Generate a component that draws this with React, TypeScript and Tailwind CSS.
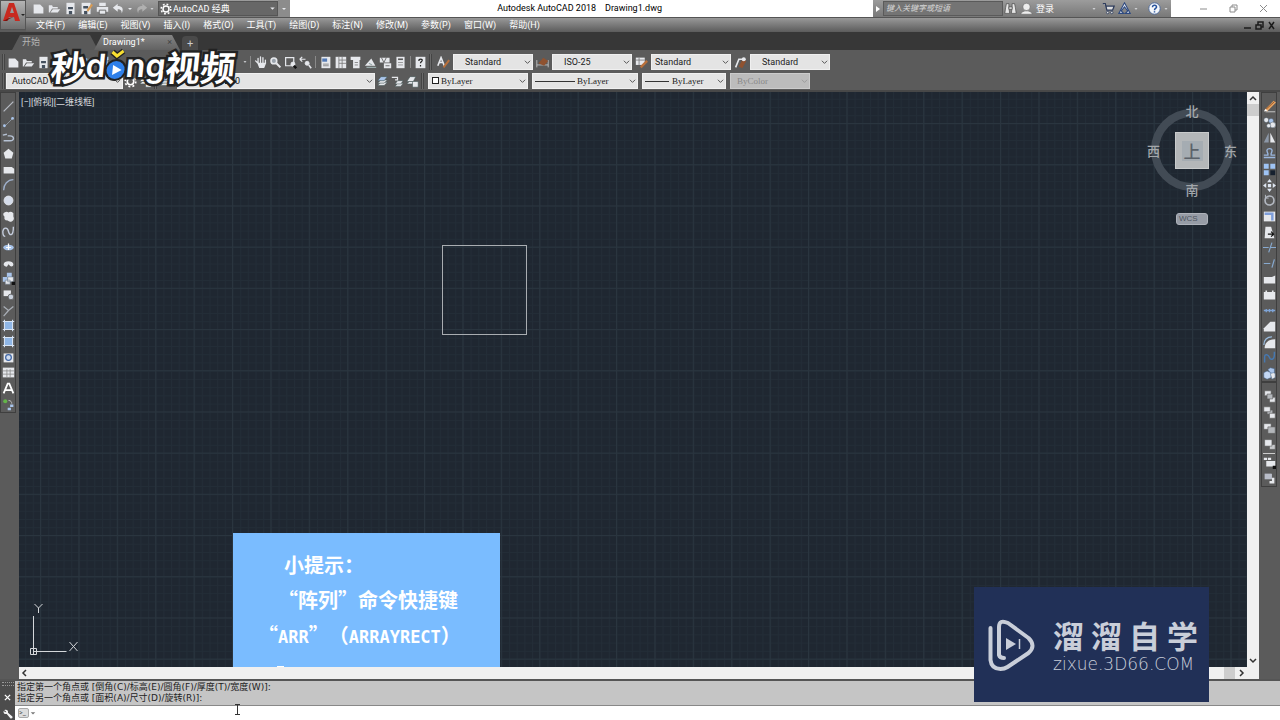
import type { ReactNode } from "react";

const FONT = "font-['Roboto','Noto_Sans_CJK_SC',sans-serif]";

const W = "#e6e8ec";
const B = "#a9c4ea";

// all glyphs are drawn on a 16x16 box
const glyphs: Record<string, ReactNode> = {
  new: <path d="M2 3h8l4 4v7H2z" fill={W} />,
  open: <path d="M1 13V4h4l1 2h6v2H5l-3 5zM6 9h9l-3 4H3z" fill={W} />,
  save: (
    <g>
      <path d="M3 1h10v14H3z" fill={W} />
      <path d="M5 6h6v3H5zM6 11h4v4H6z" fill="#44505e" />
    </g>
  ),
  saveAs: (
    <g>
      <path d="M2 1h11v14H2z" fill={W} />
      <path d="M4 5h6v3H4zM5 11h4v4H5z" fill="#44505e" />
      <path d="M8 10l6-8 2 2-6 8z" fill="#d79a52" />
    </g>
  ),
  print: (
    <g fill={W}>
      <path d="M4 1h8v4H4zM1 6h14v6H1z" />
      <path d="M4 10h8v5H4z" stroke="#555" />
    </g>
  ),
  undo: <path d="M7 2L1 7l6 5V9c4 0 5 2 5 5 3-6 0-9-5-9z" fill={W} />,
  redo: <path d="M9 2l6 5-6 5V9c-4 0-5 2-5 5-3-6 0-9 5-9z" fill="#b0b0b0" />,
  down: <path d="M4 6h8l-4 4z" fill={W} />,
  gear: (
    <g fill="none" stroke="#fff">
      <circle cx="8" cy="8" r="4" strokeWidth="2" />
      <circle cx="8" cy="8" r="6.5" strokeWidth="2" strokeDasharray="2.4 2.7" />
    </g>
  ),
  hand: (
    <path
      d="M5 9V3M8 8V1M11 8V2M14 9V5M5 9l-3-3M5 9l2 5h5l2-5z"
      stroke={W}
      strokeWidth="1.6"
      strokeLinecap="round"
      fill={W}
    />
  ),
  zoom: (
    <g stroke={W} fill="none">
      <circle cx="6" cy="6" r="3.5" strokeWidth="2" fill="#9aa3ad" />
      <path d="M9 9l5 5" strokeWidth="2.5" />
    </g>
  ),
  zoomWin: (
    <g stroke={W} fill="none">
      <path d="M2 2h10v10H2z" strokeWidth="1.5" />
      <circle cx="11" cy="10" r="2.5" fill={W} />
      <path d="M12 12l3 3" stroke="#111" strokeWidth="3" />
    </g>
  ),
  zoomPrev: (
    <g stroke={W} fill="none">
      <path d="M1 4h7M1 4l3-3M1 4l3 3" strokeWidth="1.5" />
      <circle cx="10" cy="9" r="2.5" fill={W} />
      <path d="M12 11l3 4" strokeWidth="2" />
    </g>
  ),
  props: (
    <g>
      <path d="M3 1h11v14H3z" fill={W} />
      <path d="M4 3h6v4H4z" fill="#5279b5" />
      <path d="M5 10h7M5 12h7" stroke="#777" />
    </g>
  ),
  center: (
    <g>
      <path d="M2 1h13v14H2z" fill={W} />
      <path d="M6 1v14M6 5h9M6 9h9M10 1v14" stroke="#777" />
    </g>
  ),
  palette: (
    <g>
      <path d="M2 1h12v4H2zM5 5h8v10H5z" fill={W} />
      <path d="M7 8h4M7 11h4" stroke="#777" />
    </g>
  ),
  sheet: (
    <g>
      <path d="M1 12L9 3l5 9z" fill={W} />
      <path d="M6 9l4 2M3 14h12" stroke="#9aa" strokeWidth="1.5" />
    </g>
  ),
  markup: (
    <g>
      <path d="M1 2h12v6H1zM6 9h9v6H6z" fill={W} />
      <path d="M3 2l3 6M9 2l-3 6M8 12h5" stroke="#555" />
    </g>
  ),
  calc: (
    <g>
      <path d="M3 1h10v14H3z" fill={W} />
      <path d="M5 3h6v2H5z" fill="#555" />
      <path d="M5 8h6M5 11h6" stroke="#888" />
    </g>
  ),
  help: (
    <g>
      <path d="M2 1h12v14H2z" fill={W} />
      <path d="M6 6c0-3 5-3 4 0-1 1-2 1-2 3M8 11v2" stroke="#222" strokeWidth="1.5" fill="none" />
    </g>
  ),
  textStyle: (
    <g fill="none">
      <path d="M1 12L5 2l4 10M3 8h5" stroke={W} strokeWidth="2" />
      <path d="M8 14l7-9" stroke="#b8703b" strokeWidth="2.5" />
    </g>
  ),
  dimStyle: (
    <g>
      <path d="M1 5v9M15 5v9M1 11h14" stroke="#ccc" />
      <path d="M3 9l6-7 6 4-5 6z" fill="#8f5230" />
    </g>
  ),
  tableStyle: (
    <g>
      <path d="M1 2h11v9H1z" fill={W} />
      <path d="M1 5h11M5 2v9" stroke="#777" />
      <path d="M7 14l8-8" stroke="#b8703b" strokeWidth="3" />
    </g>
  ),
  leaderStyle: (
    <g fill="none">
      <path d="M2 14l4-10h4" stroke={W} strokeWidth="2" />
      <path d="M8 14l5-9" stroke="#8f5230" strokeWidth="5" />
      <circle cx="12" cy="4" r="2.5" fill={W} />
    </g>
  ),
  layers: (
    <g stroke="#455" strokeWidth=".7">
      <path d="M2 13l4-4h8l-4 4z" fill={W} />
      <path d="M2 10l4-4h8l-4 4z" fill={W} />
      <path d="M2 7l4-5h8l-4 5z" fill={B} />
    </g>
  ),
  layerPrev: (
    <g stroke="#455" strokeWidth=".7">
      <path d="M5 14l3-4h7l-3 4z" fill={W} />
      <path d="M5 11l3-4h7l-3 4z" fill={W} />
      <path d="M1 3h7v3H5" fill="none" stroke={W} strokeWidth="1.5" />
    </g>
  ),
  layerState: (
    <g stroke="#455" strokeWidth=".7">
      <path d="M1 8l4-6h7l-3 6z" fill={W} />
      <path d="M1 11l3-3h7l-3 3z" fill={W} />
      <path d="M8 8h7v7H8z" fill={W} />
    </g>
  ),
  line: <path d="M2 14L14 2" stroke="#b6bbc4" strokeWidth="1.5" />,
  xline: (
    <g fill={B}>
      <path d="M3 13L13 3" stroke="#9aa2ad" />
      <circle cx="3" cy="12" r="1.7" />
      <circle cx="13" cy="3" r="1.7" />
    </g>
  ),
  pline: <path d="M1 5l5-1M2 12h8c6 0 5-6 0-6H7" stroke="#b6c2d4" strokeWidth="1.7" fill="none" />,
  polygon: <path d="M8 2l6 5-2 7H4L2 7z" fill={W} />,
  rect: <path d="M2 5h10l3 2v6H2z" fill={W} />,
  arc: <path d="M2 15C2 8 7 2 14 2" stroke="#9fb0cc" strokeWidth="1.7" fill="none" />,
  circle: <circle cx="8" cy="8" r="5.5" fill="#d5dcea" stroke={W} />,
  cloud: <path d="M3 3q3-2 5 0 3-2 6 1v4q2 4-2 6-3 1-5-1-3 0-4-2V8Q0 5 3 3z" fill={W} />,
  spline: <path d="M1 8c1-6 6-5 7 0s6 7 6-6M1 8c0 4 1 6 3 6" stroke="#c6cede" strokeWidth="1.7" fill="none" />,
  ellipse: (
    <g>
      <ellipse cx="8" cy="8" rx="6.5" ry="3.5" fill={B} />
      <path d="M8 3v8M5 8h6" stroke="#fff" strokeWidth="1.5" />
    </g>
  ),
  ellipseArc: <path d="M2 9c0-5 12-5 12 0 0 3-3 3-4 2l-2-2-2 3C4 12 2 11 2 9z" fill={W} />,
  insert: (
    <g>
      <path d="M6 1h6v5H6zM1 6h6v6H1z" fill={B} />
      <path d="M7 6h7v6H7zM4 10h6v5H4z" fill={W} stroke="#678" strokeWidth=".7" />
      <path d="M12 12h4v4h-4z" fill="#111" />
    </g>
  ),
  block: (
    <g>
      <path d="M2 3h9v7H2z" fill={W} />
      <circle cx="11" cy="11" r="3.5" fill="#c8d0dc" stroke="#555" />
    </g>
  ),
  point: <path d="M2 3l6 5 6-5M8 8l-6 7" stroke="#a9aeb6" strokeWidth="1.5" fill="none" />,
  hatch: (
    <g>
      <path d="M3 3h10v10H3z" fill="#8fb6e6" />
      <path d="M3 1v14M13 1v14M1 3h14M1 13h14" stroke="#d8e4f4" strokeWidth="1.3" />
    </g>
  ),
  region: (
    <g>
      <path d="M2 3h12v11H2z" fill={W} />
      <circle cx="8" cy="8" r="3.5" fill="#cfdcf0" stroke="#3f65a5" strokeWidth="1.5" />
    </g>
  ),
  table: (
    <g>
      <path d="M1 2h14v12H1z" fill={W} />
      <path d="M1 6h14M1 10h14M6 4v10M10 4v10" stroke="#8a8a8a" />
    </g>
  ),
  mtext: <path d="M2 14L7 2h2l5 12M4 10h8" stroke="#fff" strokeWidth="2.2" fill="none" />,
  addSel: (
    <g>
      <circle cx="4" cy="4" r="2.5" fill="#63b548" />
      <path d="M8 3c3 0 4 2 4 4" stroke="#ccc" fill="none" />
      <path d="M10 8h4v3h-4zM7 12h4v3H7z" fill={B} />
    </g>
  ),
  erase: (
    <g>
      <path d="M3 14.500h12" stroke="#ddd" />
      <path d="M2 12L13 1l3 2L5 14z" fill="#e3a161" />
      <path d="M3 12L14 2" stroke="#8a4a1c" />
      <path d="M1 14l2-3 3 2z" fill="#fff" />
    </g>
  ),
  copy: (
    <g stroke="#567" strokeWidth=".6">
      <circle cx="4" cy="5" r="3" fill={W} />
      <circle cx="10" cy="6" r="3" fill={B} />
      <circle cx="12" cy="11" r="3.5" fill={W} />
      <circle cx="7" cy="12" r="2.5" fill={W} />
    </g>
  ),
  mirror: (
    <g>
      <path d="M7 2v12H1z" fill="#8d98a8" />
      <path d="M9 2v12h6z" fill={W} />
    </g>
  ),
  offset: <path d="M1 13h14M1 10h5V8Q3 2 8 2t2 6v2h5" stroke="#9ab6dd" strokeWidth="1.7" fill="none" />,
  array: (
    <g>
      <path d="M1 1h6v6H1zM9 1h6v6H9zM1 9h6v6H1z" fill="#9fc4f4" />
      <path d="M9 9h6v6H9z" fill="#16202e" />
    </g>
  ),
  move: <path d="M8 0l3 4H5zM8 16l3-4H5zM0 8l4-3v6zM16 8l-4-3v6zM6 6h4v4H6z" fill="#dde5f0" />,
  rotate: (
    <g fill="none" stroke="#b4b9c2">
      <circle cx="8" cy="8" r="5.5" strokeWidth="2" />
      <path d="M3 1v4h4" strokeWidth="1.2" />
    </g>
  ),
  scale: (
    <g>
      <path d="M1 2h14v12H1z" fill={W} />
      <path d="M2 3h11v10h-3V6H2z" fill="#7e9edb" />
    </g>
  ),
  stretch: (
    <g>
      <path d="M3 1h7l4 14H2z" fill={W} />
      <path d="M6 10h7M10 7l3 3-3 3" stroke="#111" strokeWidth="1.5" fill="none" />
    </g>
  ),
  trim: <path d="M0 8h7M9 8h7M11 2L7 14" stroke="#87a9cf" strokeWidth="1.4" fill="none" />,
  extend: <path d="M1 8h8M14 3l-3 10" stroke="#87a9cf" strokeWidth="1.5" fill="none" />,
  brk: <path d="M1 5h10l4-2v10H1z" fill={W} />,
  brk2: <path d="M1 5h2V3h2v2h6V3h2v2h2v9H1z" fill={W} />,
  join: <path d="M1 8h14M4 6v4M8 6v4M12 6v4" stroke="#7fa4d6" strokeWidth="1.6" />,
  chamfer: <path d="M1 14V10L9 2h6v12z" fill={W} />,
  fillet: (
    <g>
      <path d="M2 15C2 8 7 4 15 4v11z" fill={W} />
      <path d="M1 11C1 5 5 1 11 1" stroke="#9bd" strokeWidth="1.5" fill="none" />
    </g>
  ),
  blend: <path d="M2 14V8c0-6 5-3 6 0s6 4 6-4V1" stroke="#4678b0" strokeWidth="1.8" fill="none" />,
  explode: (
    <g stroke="#47658e" strokeWidth=".6">
      <path d="M6 3l3-2 5 1v6l-4 1z" fill={B} />
      <path d="M1 7l4-2 5 2v6l-5 2-4-2z" fill="#c4d8f4" />
      <path d="M9 8l4-1 2 1v5l-4 2z" fill={W} />
    </g>
  ),
  order1: (
    <g stroke="#555" strokeWidth=".7">
      <path d="M2 1h8v6H2zM8 9h7v6H8z" fill={W} />
      <path d="M5 5h7v6H5z" fill="#b3b6ba" />
    </g>
  ),
  order2: (
    <g stroke="#555" strokeWidth=".7">
      <path d="M5 5h7v5H5z" fill="#b3b6ba" />
      <path d="M1 1h8v6H1zM8 9h7v6H8z" fill={W} />
    </g>
  ),
  order3: (
    <g stroke="#555" strokeWidth=".7">
      <path d="M1 2h9v7H1z" fill={W} />
      <path d="M6 6h9v8H6z" fill="#b3b6ba" />
    </g>
  ),
  order4: (
    <g stroke="#555" strokeWidth=".7">
      <path d="M8 8h7v6H8z" fill="#c6c8cb" />
      <path d="M2 2h9v8H2z" fill={W} />
    </g>
  ),
  annot: (
    <g>
      <path d="M1 2h4v3H1zM6 2h4v3H6zM4 6h11v7H4z" fill={W} />
      <path d="M12 12h4v4h-4z" fill="#111" />
    </g>
  ),
  hatchBack: (
    <g>
      <path d="M2 2h9v7H2z" fill="#b9bdc9" />
      <path d="M14 7v7H8v-3h3V7z" fill={W} />
    </g>
  ),
  find: (
    <g fill="#e6e6e6" stroke="#444" strokeWidth=".8">
      <path d="M3 2h3v5l1 7H1l1-7zM10 2h3l1 5 1 7H9l1-7z" />
      <path d="M6 6h4v3H6z" />
    </g>
  ),
  user: (
    <g fill="#eee" stroke="#555" strokeWidth=".6">
      <path d="M1 15q0-3 5-4h4q5 1 5 4z" />
      <circle cx="8" cy="6" r="4.5" />
    </g>
  ),
  cart: (
    <g fill="#ddd" stroke="#2e3c5c">
      <path d="M1 2h3l2 8h7l2-5H5" strokeWidth="1.6" />
      <circle cx="7" cy="13" r="1.5" />
      <circle cx="12" cy="13" r="1.5" />
    </g>
  ),
  exchange: <path d="M8 1l7 13H9l3-3-4-5-4 5 3 3H1z" stroke="#2e4a80" strokeWidth="1.3" fill="#e6ebf4" />,
  about: (
    <g>
      <circle cx="8" cy="8" r="7" fill="#f4f7fb" stroke="#41639c" />
      <path d="M5.5 6.500c0-4 5.500-3 5 0-.5 1.500-2.500 1.500-2.500 3.500M8 11.500v1.500" stroke="#24519c" strokeWidth="1.8" fill="none" />
    </g>
  ),
  wrench: <path d="M2 2c3-2 7 0 6 4l7 6c1 2-1 4-3 3L6 8C2 9 0 5 1 3l3 2 1-1z" fill="#f2f2f2" />,
};

function Glyph({ name, className = "size-[13px]" }: { name: string; className?: string }) {
  return (
    <svg viewBox="0 0 16 16" className={`shrink-0 ${className}`} aria-hidden="true">
      {glyphs[name]}
    </svg>
  );
}

function IconButton({ name }: { name: string }) {
  return (
    <button aria-label={name} className="flex h-[15px] w-[15px] shrink-0 items-center justify-center">
      <Glyph name={name} />
    </button>
  );
}

function Grip() {
  return <span className="mx-px h-4 w-[3px] shrink-0 border-x border-[#444] bg-[#6a6a6a]" />;
}

function Divider() {
  return <span className="mx-[2px] h-3 w-px shrink-0 bg-[#8a8a8a]" />;
}

interface DropProps {
  label: string;
  value: string;
  width: string;
  pad?: string;
  disabled?: boolean;
  children?: ReactNode;
}

function Drop({ label, value, width, pad = "pl-3", disabled, children }: DropProps) {
  return (
    <div
      className={`relative h-4 shrink-0 border ${width} ${
        disabled ? "border-[#ccc] bg-[#bcbcbc] text-[#888]" : "border-[#f0f0f0] bg-[#e4e4e4] text-[#222]"
      }`}
    >
      <select
        aria-label={label}
        disabled={disabled}
        className={`block h-full w-full appearance-none truncate leading-[14px] outline-none ${pad}`}
      >
        <option>{value}</option>
      </select>
      {children}
      <svg viewBox="0 0 8 8" className="pointer-events-none absolute right-px top-1 size-[7px]">
        <path d="M1 2l3 3 3-3" fill="none" stroke={disabled ? "#999" : "#444"} />
      </svg>
    </div>
  );
}

function TitleBar() {
  return (
    <header className="flex h-[17px] items-stretch bg-white text-[9px] text-white">
      <div className="flex w-[252px] shrink-0 items-center bg-linear-to-b from-[#9c9c9c] to-[#787878] pl-[5px]">
        <div className="flex gap-px">
          {["new", "open", "save", "saveAs", "print", "undo"].map((n) => (
            <IconButton key={n} name={n} />
          ))}
        </div>
        <Glyph name="down" className="size-2" />
        <IconButton name="redo" />
        <Glyph name="down" className="size-[6px]" />
        <div className="ml-[3px] flex h-[15px] flex-1 items-center border border-[#555] bg-[#676767] pl-px">
          <Glyph name="gear" className="size-3" />
          <select aria-label="工作空间" className="min-w-0 flex-1 appearance-none pl-px text-[9px] leading-3 outline-none">
            <option>AutoCAD 经典</option>
          </select>
          <Glyph name="down" className="size-[9px]" />
        </div>
      </div>
      <div className="flex w-3 shrink-0 items-center justify-center bg-[#8c8c8c]">
        <Glyph name="down" className="size-2" />
      </div>
      <div className="mr-[211px] flex-1 text-right text-[9px] leading-4 whitespace-pre text-black">
        Autodesk AutoCAD 2018{"    "}Drawing1.dwg
      </div>
      <div className="flex w-[298px] shrink-0 items-center bg-linear-to-b from-[#9c9c9c] to-[#787878]">
        <svg viewBox="0 0 8 8" className="mx-px size-2">
          <path d="M2 1l4 3-4 3z" fill="#fff" />
        </svg>
        <input
          aria-label="搜索"
          placeholder="键入关键字或短语"
          className="h-[15px] w-[120px] border border-[#5a5a5a] bg-[#747474] pl-[2px] text-[8px] italic outline-none placeholder:text-[#d6d6d6]"
        />
        <div className="flex flex-1 items-center gap-px">
          <IconButton name="find" />
          <IconButton name="user" />
          <button className="mr-auto px-px leading-3">登录</button>
          <Glyph name="down" className="size-[6px]" />
          <span className="w-[2px]" />
          <IconButton name="cart" />
          <IconButton name="exchange" />
          <Glyph name="down" className="size-[6px]" />
          <span className="w-[6px]" />
          <IconButton name="about" />
          <Glyph name="down" className="mr-[2px] size-[6px]" />
        </div>
      </div>
      <div className="flex w-[109px] shrink-0 items-center justify-between pr-3 pl-[28px]">
        {["M1 5h7", "M1 3h5v5H1zM3 3V1h5v5H6", "M1 1l7 7M8 1L1 8"].map((d, i) => (
          <button key={d} aria-label={["最小化", "还原", "关闭"][i]}>
            <svg viewBox="0 0 9 9" className="size-[9px]">
              <path d={d} fill="none" stroke="#8c8c8c" />
            </svg>
          </button>
        ))}
      </div>
    </header>
  );
}

const menus = [
  "文件(F)", "编辑(E)", "视图(V)", "插入(I)", "格式(O)", "工具(T)",
  "绘图(D)", "标注(N)", "修改(M)", "参数(P)", "窗口(W)", "帮助(H)",
];

function MenuBar() {
  return (
    <nav className="flex h-[15px] items-center border-t border-[#555] bg-linear-to-b from-[#999] to-[#5c5c5c] pr-1 pl-[10px] text-[9px] text-white">
      <div className="flex flex-1 gap-[13px]">
        {menus.map((m) => (
          <button key={m} className="leading-3 whitespace-nowrap">{m}</button>
        ))}
      </div>
      <div className="flex gap-[3px]">
        {["M1 7h7", "M1 4h5v4H1zM3 4V1h5v5H6", "M2 1l5 7M7 1L2 8"].map((d, i) => (
          <button key={d} aria-label={["最小化图形", "还原图形", "关闭图形"][i]}>
            <svg viewBox="0 0 9 9" className="size-[9px]">
              <path d={d} fill="none" stroke="#1c1c1c" strokeWidth="1.5" />
            </svg>
          </button>
        ))}
      </div>
    </nav>
  );
}

function FileTabs() {
  return (
    <div className="flex h-[18px] items-end bg-[#373737] pl-3 text-[9px]">
      <button className="h-[15px] w-[86px] bg-[#595959] pl-[10px] text-left text-[#b4b4b4] [clip-path:polygon(8px_0,78px_0,100%_100%,0_100%)]">
        开始
      </button>
      <button className="-ml-1 flex h-[15px] w-[86px] items-center justify-between bg-linear-to-b from-[#858585] to-[#626262] pr-2 pl-[9px] text-white [clip-path:polygon(8px_0,78px_0,100%_100%,0_100%)]">
        Drawing1*
        <span className="text-[#444]">×</span>
      </button>
      <button aria-label="新图形" className="ml-[2px] h-[14px] w-4 rounded-t-sm bg-[#4a4a4a] text-[11px] leading-[13px] text-[#ccc]">
        +
      </button>
    </div>
  );
}

function Toolbars() {
  return (
    <div className="flex h-[42px] flex-col gap-[3px] border-b-2 border-[#484848] bg-[#5b5b5b] pt-1 text-[9px]">
      <div className="flex h-4 items-center pl-px">
        <Grip />
        {["new", "open", "save", "print", "find", "copy", "palette"].map((n) => (
          <IconButton key={n} name={n} />
        ))}
        <div className="flex w-[137px] shrink-0 justify-end">
          <Glyph name="down" className="size-[6px]" />
        </div>
        <Divider />
        {["hand", "zoom", "zoomWin", "zoomPrev"].map((n) => (
          <IconButton key={n} name={n} />
        ))}
        <Divider />
        {["props", "center", "palette", "sheet", "markup", "calc"].map((n) => (
          <IconButton key={n} name={n} />
        ))}
        <Divider />
        <IconButton name="help" />
        <Grip />
        <div className="ml-[3px] flex items-center gap-[2px]">
          <IconButton name="textStyle" />
          <Drop label="文字样式" value="Standard" width="w-[80px]" pad="pl-[11px]" />
          <IconButton name="dimStyle" />
          <Drop label="标注样式" value="ISO-25" width="w-[80px]" pad="pl-[11px]" />
          <IconButton name="tableStyle" />
          <Drop label="表格样式" value="Standard" width="w-[80px]" pad="pl-[3px]" />
          <IconButton name="leaderStyle" />
          <Drop label="多重引线样式" value="Standard" width="w-[80px]" pad="pl-[11px]" />
        </div>
      </div>
      <div className="flex h-4 items-center pl-px">
        <Grip />
        <Drop label="工作空间" value="AutoCAD 经典" width="w-[117px]" pad="pl-[5px]" />
        <IconButton name="gear" />
        <IconButton name="layerState" />
        <Grip />
        <IconButton name="layers" />
        <span className="w-1" />
        <Drop label="图层" value="0" width="w-[198px]" pad="pl-[57px]">
          <span className="pointer-events-none absolute top-[3px] left-[47px] size-[7px] border border-[#222]" />
        </Drop>
        <IconButton name="layers" />
        <IconButton name="layerPrev" />
        <IconButton name="layerState" />
        <Grip />
        <div className="ml-[3px] flex items-center gap-1 font-['Liberation_Serif',serif]">
          <Drop label="颜色" value="ByLayer" width="w-[100px]" pad="pl-3">
            <span className="pointer-events-none absolute top-[3px] left-[3px] size-[7px] border border-[#222] bg-white" />
          </Drop>
          <Drop label="线型" value="ByLayer" width="w-[106px]" pad="pl-[44px]">
            <span className="pointer-events-none absolute top-[7px] left-[2px] h-px w-10 bg-[#333]" />
          </Drop>
          <Drop label="线宽" value="ByLayer" width="w-[84px]" pad="pl-[29px]">
            <span className="pointer-events-none absolute top-[7px] left-[2px] h-px w-6 bg-[#333]" />
          </Drop>
          <Drop label="打印样式" value="ByColor" width="w-[80px]" pad="pl-[6px]" disabled />
        </div>
      </div>
    </div>
  );
}

const drawTools = [
  "line", "xline", "pline", "polygon", "rect", "arc", "circle", "cloud", "spline", "ellipse",
  "ellipseArc", "insert", "block", "point", "hatch", "hatch", "region", "table", "mtext", "addSel",
];

const modifyTools = [
  "erase", "copy", "mirror", "offset", "array", "move", "rotate", "scale", "stretch",
  "trim", "extend", "brk", "brk2", "join", "chamfer", "fillet", "blend", "explode",
];

function DrawBar() {
  return (
    <aside className="w-[19px] shrink-0 bg-[#5b5b5b]">
      <div className="flex h-[321px] w-4 flex-col items-center justify-between border border-[#3f3f3f] pt-[6px]">
        {drawTools.map((n, i) => (
          <IconButton key={i} name={n} />
        ))}
      </div>
    </aside>
  );
}

function ModifyBar() {
  return (
    <aside className="w-[21px] shrink-0 bg-[#5b5b5b] pl-[2px]">
      <div className="flex h-[290px] w-4 flex-col items-center justify-between border border-[#3f3f3f] pt-[6px]">
        {modifyTools.map((n) => (
          <IconButton key={n} name={n} />
        ))}
      </div>
      <div className="flex w-4 flex-col items-center gap-px border border-[#3f3f3f] pt-[6px]">
        {["order1", "order2", "order3", "order4"].map((n) => (
          <IconButton key={n} name={n} />
        ))}
        <span className="h-px w-3 bg-[#ccc]" />
        <IconButton name="annot" />
        <IconButton name="hatchBack" />
      </div>
    </aside>
  );
}

function Grid() {
  return (
    <svg className="absolute inset-0 h-full w-full" aria-hidden="true">
      <defs>
        <pattern id="minor" x="21.500" y="31.500" width="7.68" height="8.24" patternUnits="userSpaceOnUse">
          <path d="M.5 0v8.240M0 .5h7.680" stroke="#232d37" fill="none" />
        </pattern>
        <pattern id="major" x="21" y="31" width="38.4" height="41.2" patternUnits="userSpaceOnUse">
          <path d="M.5 0v41.200M0 .5h38.400" stroke="#2a353f" fill="none" />
        </pattern>
      </defs>
      <rect width="100%" height="100%" fill="url(#minor)" />
      <rect width="100%" height="100%" fill="url(#major)" />
    </svg>
  );
}

function ViewCube() {
  return (
    <div className="absolute top-3 right-[10px] w-[90px] font-['Noto_Sans_CJK_SC',sans-serif] text-[13px] leading-[14px] font-medium text-[#a3a7ab]">
      <div className="absolute top-[5px] left-[4px] size-[82px] rounded-full border-[8px] border-[#424b55]" />
      <div className="relative flex flex-col items-center">
        <span>北</span>
        <div className="my-[14px] flex w-full items-center justify-between">
          <span>西</span>
          <button className="flex h-[37px] w-[34px] items-center justify-center border border-[#c9cbcc] bg-[#b4b7b9]">
            <span className="bg-[#a5acb2] px-[2px] text-[17px] leading-5 text-[#5b626a]">上</span>
          </button>
          <span>东</span>
        </div>
        <span>南</span>
        <button className="mt-4 h-3 w-8 rounded-[3px] border border-[#aeb2ba] bg-[#979ca6] pl-[2px] text-left font-['Liberation_Sans',sans-serif] text-[8px] leading-[10px] text-[#4e5560]">
          WCS
        </button>
      </div>
    </div>
  );
}

function TipCard() {
  return (
    <div className="absolute bottom-0 left-[214px] h-[134px] w-[267px] bg-[#7abcff] pt-[14px] font-['Noto_Sans_CJK_SC',sans-serif] text-[20px] leading-[35px] font-bold whitespace-nowrap text-white">
      <p className="pl-[51px]">小提示：</p>
      <p className="pl-[45px]">“阵列”命令快捷键</p>
      <p className="flex items-baseline pl-[25px]">
        <span>“</span>
        <span className="font-['DejaVu_Sans_Mono',monospace] text-[17px]">ARR</span>
        <span>”</span>
        <span>（</span>
        <span className="font-['DejaVu_Sans_Mono',monospace] text-[17px]">ARRAYRECT</span>
        <span>）</span>
      </p>
      <span className="absolute bottom-0 left-[44px] h-px w-[7px] bg-white" />
    </div>
  );
}

function Canvas() {
  return (
    <div className="relative min-w-0 flex-1 overflow-hidden bg-[#1f2731]">
      <Grid />
      <div className="absolute top-1 left-[2px] text-[9px] leading-3 text-[#d5d8dc]">[−][俯视][二维线框]</div>
      <div className="absolute top-[153px] left-[423px] h-[90px] w-[85px] border border-[#a9adb1]" />
      <ViewCube />
      <svg viewBox="0 0 52 60" className="absolute bottom-[8px] left-[10px] h-[60px] w-[52px]" aria-label="UCS">
        <g fill="none" stroke="#d4d7da">
          <path d="M4.500 17v38M4.500 52.500h33M1.500 49.500h6v6h-6z" />
          <path d="M5.500 5l4 4 4-4M9.500 9v5M40.500 43l8 9M48.500 43l-8 9" />
        </g>
      </svg>
      <TipCard />
    </div>
  );
}

function ScrollArrow({ d, label }: { d: string; label: string }) {
  return (
    <button aria-label={label} className="flex size-3 shrink-0 items-center justify-center">
      <svg viewBox="0 0 8 8" className="size-2">
        <path d={d} fill="none" stroke="#333" strokeWidth="1.5" />
      </svg>
    </button>
  );
}

function CommandLine() {
  return (
    <footer className="flex shrink-0 border-t-2 border-[#555]">
      <div className="flex w-[15px] shrink-0 flex-col items-center justify-between bg-[#4c4c4c] py-px">
        <span className="h-1 w-3 border-y border-dotted border-[#999]" />
        <button aria-label="关闭命令行" className="h-3">
          <svg viewBox="0 0 8 8" className="size-[7px]">
            <path d="M1 1l6 6M7 1L1 7" stroke="#fff" strokeWidth="1.5" />
          </svg>
        </button>
        <button aria-label="自定义"><Glyph name="wrench" className="size-[10px]" /></button>
      </div>
      <div className="min-w-0 flex-1">
        <div className="h-[25px] border-b border-[#888] bg-[#c5c5c5] pt-px pl-[2px] font-['DejaVu_Sans','Noto_Sans_CJK_SC',sans-serif] text-[9px] leading-[11px] text-[#222]">
          <p>指定第一个角点或 [倒角(C)/标高(E)/圆角(F)/厚度(T)/宽度(W)]:</p>
          <p>指定另一个角点或 [面积(A)/尺寸(D)/旋转(R)]:</p>
        </div>
        <div className="flex h-[14px] items-center bg-white pl-[3px]">
          <span className="h-[10px] w-[11px] rounded-[2px] border border-[#aaa] bg-[#ddd] text-[7px] leading-[8px] text-[#555]">&gt;_</span>
          <svg viewBox="0 0 8 8" className="mx-px size-[6px]"><path d="M1 3h6L4 6z" fill="#777" /></svg>
          <input aria-label="命令" className="h-3 flex-1 text-[9px] outline-none" />
        </div>
      </div>
    </footer>
  );
}

function MiaodongMark() {
  return (
    <div className="pointer-events-none absolute top-[45px] left-[51px] flex -skew-x-6 items-center font-['Noto_Sans_CJK_SC',sans-serif] text-[35px] leading-[42px] font-bold text-white [-webkit-text-stroke:5px_#222] [paint-order:stroke_fill]">
      <span>秒</span>
      <span className="font-['Inter',sans-serif] text-[32px] font-semibold">d</span>
      <svg viewBox="0 0 20 40" className="h-10 w-5 overflow-visible" aria-label="o">
        <path d="M5 6l5 4 6-5" fill="none" stroke="#222" strokeWidth="6" />
        <path d="M5 6l5 4 6-5" fill="none" stroke="#f8df32" strokeWidth="3" />
        <circle cx="10" cy="24" r="11" fill="#222" />
        <circle cx="10" cy="24" r="9" fill="#2f80ea" />
        <path d="M7 19l9 5-9 5z" fill="#fff" />
      </svg>
      <span className="font-['Inter',sans-serif] text-[32px] font-semibold">ng</span>
      <span>视频</span>
    </div>
  );
}

function ZixueMark() {
  return (
    <div className="absolute right-[71px] bottom-[18px] flex h-[115px] w-[235px] items-center gap-4 bg-[#213057] pl-[13px] text-[#c9ced9]">
      <svg viewBox="0 0 50 52" className="h-[52px] w-[50px] shrink-0" aria-hidden="true">
        <g fill="none" stroke="#c9ced9" strokeWidth="4" strokeLinecap="round" strokeLinejoin="round">
          <path d="M3.500 9v32q1 9 10 9 4 0 7-2l21-14q8-7 0-15L21 4q-9-4-9 4v28q1 3 5 3" />
        </g>
        <path d="M19 19l10 6-10 6z" fill="#c9ced9" />
        <path d="M32.500 20v10" stroke="#c9ced9" strokeWidth="1.500" />
      </svg>
      <div className="flex flex-col">
        <div className="flex gap-[7px] font-['Noto_Sans_CJK_SC',sans-serif] text-[31px] leading-[38px] font-bold">
          <span>溜</span>
          <span>溜</span>
          <span>自</span>
          <span>学</span>
        </div>
        <span className="font-['DejaVu_Sans',sans-serif] text-[17px] leading-5 font-extralight">zixue.3D66.COM</span>
      </div>
    </div>
  );
}

export default function App() {
  return (
    <div className={`relative flex h-screen flex-col overflow-hidden bg-[#5b5b5b] ${FONT}`}>
      <div className="flex shrink-0">
        <button aria-label="应用程序菜单" className="z-10 -mb-1 flex h-[30px] w-[26px] shrink-0 items-center border border-[#555] bg-linear-to-b from-[#b4b4b4] to-[#707070]">
          <svg viewBox="0 0 24 28" className="h-7 w-6">
            <path d="M2 20L8 2h5l6 18h-5l-1-4H8l-2 4zM9 12h4l-2-6z" fill="#c8291f" fillRule="evenodd" />
            <path d="M2 20l6-3 5-1-5 2-2 2z" fill="#7d120e" />
            <path d="M20 13h4l-2 2z" fill="#222" />
          </svg>
        </button>
        <div className="min-w-0 flex-1">
          <TitleBar />
          <MenuBar />
        </div>
      </div>
      <FileTabs />
      <Toolbars />
      <main className="flex min-h-0 flex-1">
        <DrawBar />
        <div className="flex min-w-0 flex-1 flex-col">
          <div className="flex min-h-0 flex-1">
            <Canvas />
            <div className="flex w-3 shrink-0 flex-col justify-between bg-[#f0f0f0]">
              <div>
                <ScrollArrow label="向上滚动" d="M1 6l3-3 3 3" />
                <div className="h-3 bg-[#cdcdcd]" />
              </div>
              <ScrollArrow label="向下滚动" d="M1 2l3 3 3-3" />
            </div>
          </div>
          <div className="flex h-3 shrink-0 items-center bg-[#f0f0f0] pr-3">
            <ScrollArrow label="向左滚动" d="M5 1L2 4l3 3" />
            <span className="ml-auto h-3 w-[11px] bg-[#cdcdcd]" />
            <ScrollArrow label="向右滚动" d="M3 1l3 3-3 3" />
          </div>
        </div>
        <ModifyBar />
      </main>
      <CommandLine />
      <MiaodongMark />
      <ZixueMark />
      <svg viewBox="0 0 5 11" className="pointer-events-none absolute bottom-[5px] left-[235px] h-[11px] w-[5px]">
        <path d="M0 .5h5M0 10.500h5M2.500 0v11" stroke="#333" fill="none" />
      </svg>
    </div>
  );
}
